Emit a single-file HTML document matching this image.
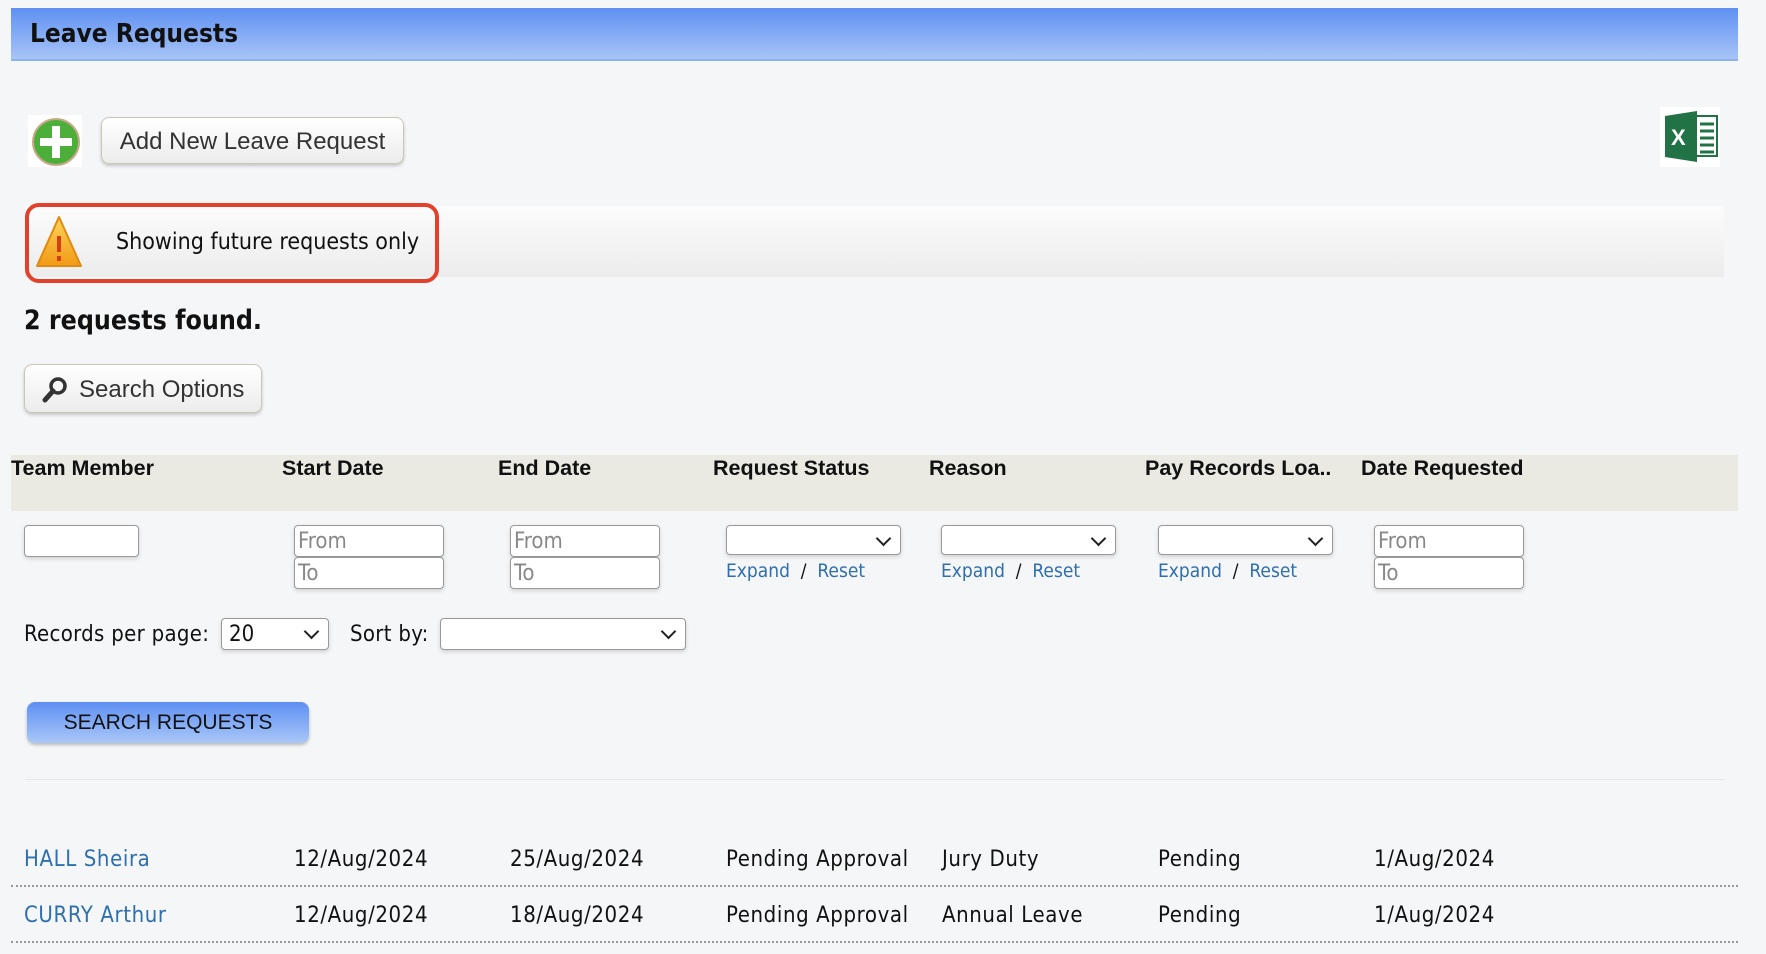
<!DOCTYPE html>
<html><head><meta charset="utf-8"><style>
*{box-sizing:border-box;margin:0;padding:0}
body{width:1766px;height:954px;background:#f5f6f8;position:relative;overflow:hidden;font-family:"DejaVu Sans Condensed","DejaVu Sans","Liberation Sans",sans-serif;color:#111}
.a{position:absolute;white-space:nowrap}
.hdr{left:11px;top:8px;width:1727px;height:53px;background:linear-gradient(#5f90f2,#a6c4f7);border-bottom:2px solid #8fb0ee;}
.hdr span{position:absolute;left:19px;top:11px;font-size:26px;font-weight:bold}
.btn{background:linear-gradient(#fff,#ececec);border:1px solid #c9c7b8;border-radius:8px;box-shadow:0 2px 3px rgba(0,0,0,.2);font-family:"Liberation Sans",sans-serif;color:#333}
.th{font-family:"Liberation Sans",sans-serif;font-weight:bold;font-size:21.5px;top:456px}
.in{background:#fff;border:1px solid #999;border-radius:4px;height:32px;box-shadow:0 2px 4px rgba(0,0,0,.15);font-size:22px;color:#888;padding-left:3px;line-height:32px}
.sel{background:#fff;border:1px solid #999;border-radius:4px;height:30px;box-shadow:0 2px 4px rgba(0,0,0,.15)}
.sel:after{content:"";position:absolute;right:11px;top:7px;width:9px;height:9px;border-right:2px solid #222;border-bottom:2px solid #222;transform:rotate(45deg)}
.lk{color:#2f6fad;font-size:19px}
.td{font-size:22px;top:847px;letter-spacing:.6px}
.td2{top:903px}
.dot{left:11px;width:1727px;height:0;border-top:2px dotted #999}
</style></head><body>
<div class="a hdr"><span>Leave Requests</span></div>

<div class="a" style="left:28px;top:115px;width:54px;height:52px;background:#fff"></div>
<svg class="a" style="left:31px;top:117px" width="50" height="50" viewBox="0 0 50 50"><circle cx="25" cy="25" r="23" fill="#4caf3a" stroke="#c9a98a" stroke-width="2"/><rect x="9" y="21" width="32" height="8" fill="#fff"/><rect x="21" y="9" width="8" height="32" fill="#fff"/></svg>
<div class="a btn" style="left:101px;top:117px;width:303px;height:47px;font-size:24px;line-height:47px;text-align:center">Add New Leave Request</div>

<svg class="a" style="left:1660px;top:107px" width="60" height="60" viewBox="0 0 60 60"><rect width="60" height="60" fill="#fff"/><rect x="33" y="9" width="24" height="40" fill="#fff" stroke="#217346" stroke-width="2"/><g stroke="#217346" stroke-width="3"><line x1="40" y1="17" x2="54" y2="17"/><line x1="40" y1="24" x2="54" y2="24"/><line x1="40" y1="31" x2="54" y2="31"/><line x1="40" y1="38" x2="54" y2="38"/><line x1="40" y1="45" x2="54" y2="45"/></g><path d="M5 9 L37 4 L37 55 L5 50 Z" fill="#217346"/><text x="11" y="38" font-family="Liberation Sans" font-weight="bold" font-size="22" fill="#fff">X</text></svg>

<div class="a" style="left:25px;top:206px;width:1699px;height:71px;background:linear-gradient(#fcfcfc,#ececec)"></div>
<div class="a" style="left:25px;top:203px;width:414px;height:80px;border:4px solid #e3412c;border-radius:14px"></div>
<svg class="a" style="left:34px;top:214px" width="50" height="56" viewBox="0 0 50 56"><defs><linearGradient id="g" x1="0" y1="0" x2="0" y2="1"><stop offset="0" stop-color="#fbd55a"/><stop offset="1" stop-color="#f29a16"/></linearGradient></defs><path d="M25 3 L47 52 L3 52 Z" fill="url(#g)" stroke="#e08a10" stroke-linejoin="round" stroke-width="2"/><rect x="23" y="22" width="4" height="16" fill="#d2401a"/><rect x="23" y="42" width="4" height="5" fill="#d2401a"/></svg>
<div class="a" style="left:116px;top:229px;font-size:23px">Showing future requests only</div>

<div class="a" style="left:24px;top:305px;font-size:26.5px;font-weight:bold">2 requests found.</div>

<div class="a btn" style="left:24px;top:364px;width:238px;height:49px;font-size:24px;line-height:49px;padding-left:54px">Search Options</div>
<svg class="a" style="left:42px;top:376px" width="26" height="28" viewBox="0 0 26 28"><circle cx="16" cy="10" r="7" fill="none" stroke="#333" stroke-width="3.5"/><line x1="11" y1="15" x2="3" y2="24" stroke="#333" stroke-width="5" stroke-linecap="round"/></svg>

<div class="a" style="left:11px;top:455px;width:1727px;height:56px;background:#eaeae3"></div>
<div class="a th" style="left:11px">Team Member</div>
<div class="a th" style="left:282px">Start Date</div>
<div class="a th" style="left:498px">End Date</div>
<div class="a th" style="left:713px">Request Status</div>
<div class="a th" style="left:929px">Reason</div>
<div class="a th" style="left:1145px">Pay Records Loa..</div>
<div class="a th" style="left:1361px">Date Requested</div>

<div class="a in" style="left:24px;top:525px;width:115px"></div>
<div class="a in" style="left:294px;top:525px;width:150px">From</div>
<div class="a in" style="left:294px;top:557px;width:150px">To</div>
<div class="a in" style="left:510px;top:525px;width:150px">From</div>
<div class="a in" style="left:510px;top:557px;width:150px">To</div>
<div class="a in" style="left:1374px;top:525px;width:150px">From</div>
<div class="a in" style="left:1374px;top:557px;width:150px">To</div>
<div class="a sel" style="left:726px;top:525px;width:175px"></div>
<div class="a sel" style="left:941px;top:525px;width:175px"></div>
<div class="a sel" style="left:1158px;top:525px;width:175px"></div>
<div class="a lk" style="left:726px;top:560px">Expand <span style="color:#111">&nbsp;/&nbsp;</span> Reset</div>
<div class="a lk" style="left:941px;top:560px">Expand <span style="color:#111">&nbsp;/&nbsp;</span> Reset</div>
<div class="a lk" style="left:1158px;top:560px">Expand <span style="color:#111">&nbsp;/&nbsp;</span> Reset</div>

<div class="a" style="left:24px;top:622px;font-size:22px;letter-spacing:.3px">Records per page:</div>
<div class="a sel" style="left:221px;top:618px;width:108px;height:32px;font-size:22px;padding-left:7px;line-height:32px">20</div>
<div class="a" style="left:350px;top:622px;font-size:22px;letter-spacing:.3px">Sort by:</div>
<div class="a sel" style="left:440px;top:618px;width:246px;height:32px"></div>

<div class="a" style="left:27px;top:702px;width:282px;height:41px;border-radius:8px;background:linear-gradient(#5e8ff2,#a9c7f8);box-shadow:0 2px 3px rgba(0,0,0,.25);font-family:'Liberation Sans',sans-serif;font-size:21px;line-height:41px;text-align:center;color:#111">SEARCH REQUESTS</div>

<div class="a" style="left:25px;top:779px;width:1699px;height:1px;background:#e6e7ea"></div>

<div class="a td lk" style="left:24px;font-size:22px">HALL Sheira</div>
<div class="a td" style="left:294px">12/Aug/2024</div>
<div class="a td" style="left:510px">25/Aug/2024</div>
<div class="a td" style="left:726px">Pending Approval</div>
<div class="a td" style="left:942px">Jury Duty</div>
<div class="a td" style="left:1158px">Pending</div>
<div class="a td" style="left:1374px">1/Aug/2024</div>
<div class="a dot" style="top:885px"></div>

<div class="a td td2 lk" style="left:24px;font-size:22px">CURRY Arthur</div>
<div class="a td td2" style="left:294px">12/Aug/2024</div>
<div class="a td td2" style="left:510px">18/Aug/2024</div>
<div class="a td td2" style="left:726px">Pending Approval</div>
<div class="a td td2" style="left:942px">Annual Leave</div>
<div class="a td td2" style="left:1158px">Pending</div>
<div class="a td td2" style="left:1374px">1/Aug/2024</div>
<div class="a dot" style="top:941px"></div>
</body></html>
